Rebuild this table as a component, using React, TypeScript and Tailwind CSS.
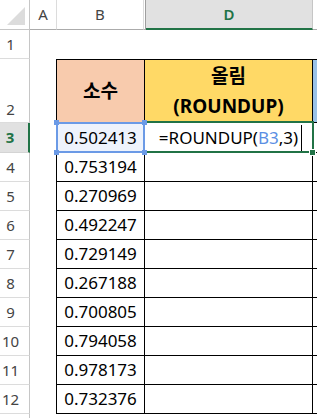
import React from "react";

const values = [
  "0.502413",
  "0.753194",
  "0.270969",
  "0.492247",
  "0.729149",
  "0.267188",
  "0.700805",
  "0.794058",
  "0.978173",
  "0.732376",
];

function RowHead({ n, active = false, tall = false }: { n: number; active?: boolean; tall?: boolean }) {
  if (active) {
    return (
      <div className="w-[30px] shrink-0 flex items-center justify-center pr-[8px] bg-[#e1e1e1] border-r-2 border-r-[#217346] border-b border-b-[#d4d4d4] text-[15px] font-bold text-[#217346]">
        {n}
      </div>
    );
  }
  return (
    <div
      className={`w-[30px] shrink-0 flex justify-center pr-[8px] border-r border-r-[#c6c6c6] border-b border-b-[#dcdcdc] text-[15px] text-[#444] ${
        tall ? "items-end pb-[2px]" : "items-center"
      }`}
    >
      {n}
    </div>
  );
}

export default function App() {
  return (
    <div className="relative w-[317px] h-[418px] overflow-hidden bg-white text-black font-['Noto_Sans','Noto_Sans_CJK_KR',sans-serif]">
      {/* column headers */}
      <div className="flex h-[30px]">
        <div className="w-[30px] shrink-0 border-r border-b border-[#c6c6c6]">
          <svg width="29" height="29" viewBox="0 0 29 29">
            <polygon points="25,7 25,25 7,25" fill="#dcdcdc" />
          </svg>
        </div>
        <div className="w-[27px] shrink-0 flex items-center justify-center border-r border-r-[#dcdcdc] border-b border-b-[#ababab] text-[15px] text-[#444]">
          A
        </div>
        <div className="w-[87px] shrink-0 flex items-center justify-center border-r border-r-[#dcdcdc] border-b border-b-[#ababab] text-[15px] text-[#444]">
          B
        </div>
        <div className="w-[2px] shrink-0 border-r border-r-[#9e9e9e] border-b border-b-[#ababab]" />
        <div className="w-[167px] shrink-0 flex items-center justify-center bg-[#e1e1e1] border-r border-r-[#c6c6c6] border-b-2 border-b-[#217346] text-[15px] font-semibold text-[#217346]">
          D
        </div>
        <div className="flex-1 border-b border-b-[#ababab]" />
      </div>

      {/* row 1 */}
      <div className="flex h-[29px]">
        <RowHead n={1} />
        <div className="flex-1" />
      </div>

      {/* row 2: table header */}
      <div className="flex h-[64px]">
        <RowHead n={2} tall />
        <div className="w-[26px] shrink-0" />
        <div className="w-[89px] shrink-0 flex items-center justify-center bg-[#f8cbad] border border-black text-[19px] font-bold">
          소수
        </div>
        <div className="w-[168px] shrink-0 flex flex-col items-center justify-center bg-[#ffd966] border-y border-r border-black text-[19px] font-bold leading-[30px]">
          <span>올림</span>
          <span>(ROUNDUP)</span>
        </div>
        <div className="flex-1 bg-[#9bc2e6] border-y border-black" />
      </div>

      {/* data rows */}
      {values.map((v, i) => (
        <div key={v} className={`flex ${i === 0 ? "h-[30px]" : "h-[29px]"}`}>
          <RowHead n={i + 3} active={i === 0} />
          <div className="w-[26px] shrink-0" />
          <div
            className={`w-[89px] shrink-0 flex items-center justify-center border-x border-b border-black text-[17px] ${
              i === 0 ? "bg-[#eef3fc]" : ""
            }`}
          >
            {v}
          </div>
          <div className="w-[168px] shrink-0 flex items-center justify-center border-r border-b border-black text-[17px]">
            {i === 0 && (
              <span>
                =ROUNDUP(<span className="text-[#5b8fe3]">B3</span>,3)
              </span>
            )}
          </div>
          <div className="flex-1 border-b border-black" />
        </div>
      ))}

      {/* next row header, cut off by the window */}
      <div className="flex h-[10px]">
        <div className="w-[30px] shrink-0 border-r border-r-[#c6c6c6]" />
      </div>

      {/* active cell D3 */}
      <div className="absolute left-[143px] top-[121px] w-[171px] h-[32px] border-2 border-[#217346]" />
      <div className="absolute left-[301px] top-[125px] w-px h-[26px] bg-black" />
      <div className="absolute left-[309px] top-[149px] w-[7px] h-[7px] bg-[#217346] border border-white" />

      {/* referenced range B3 */}
      <div className="absolute left-[56px] top-[122px] w-[89px] h-[31px] border-2 border-[#6b9ae6]" />
      <div className="absolute left-[54px] top-[120px] w-[5px] h-[5px] bg-[#6b9ae6]" />
      <div className="absolute left-[142px] top-[120px] w-[5px] h-[5px] bg-[#6b9ae6]" />
      <div className="absolute left-[54px] top-[150px] w-[5px] h-[5px] bg-[#6b9ae6]" />
      <div className="absolute left-[142px] top-[150px] w-[5px] h-[5px] bg-[#6b9ae6]" />
    </div>
  );
}
